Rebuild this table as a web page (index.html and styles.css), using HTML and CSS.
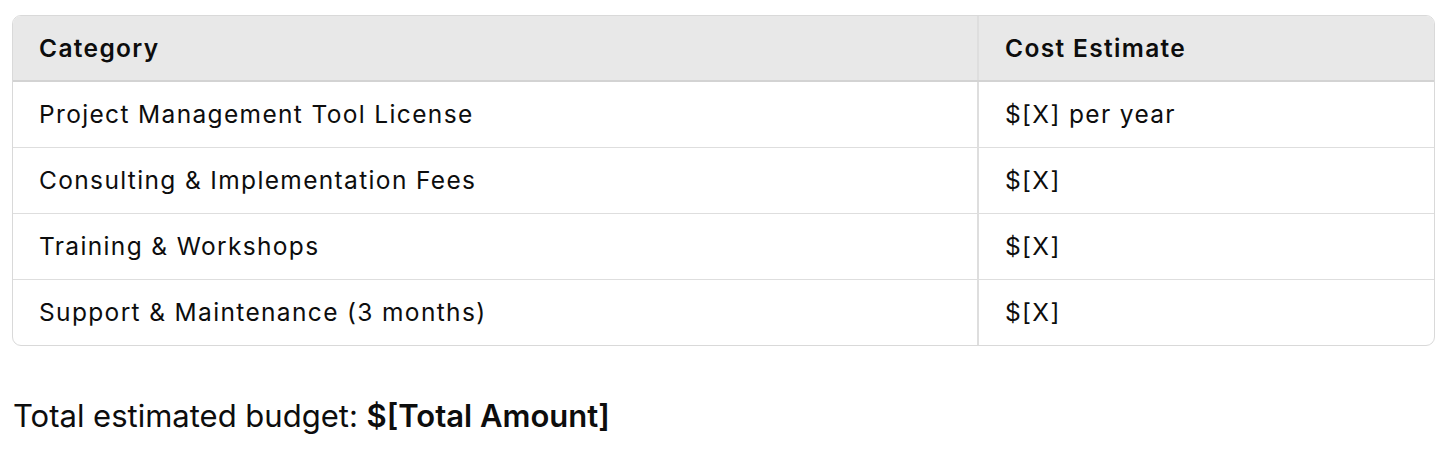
FILE: index.html
```html
<!DOCTYPE html>
<html>
<head>
<meta charset="utf-8">
<link rel="stylesheet" href="styles.css">
</head>
<body>
<div class="page">
  <div class="table-wrap">
    <table class="budget">
      <thead>
        <tr><th class="col-cat">Category</th><th>Cost Estimate</th></tr>
      </thead>
      <tbody>
        <tr><td>Project Management Tool License</td><td>$[X] per year</td></tr>
        <tr><td>Consulting &amp; Implementation Fees</td><td>$[X]</td></tr>
        <tr><td>Training &amp; Workshops</td><td>$[X]</td></tr>
        <tr><td>Support &amp; Maintenance (3 months)</td><td>$[X]</td></tr>
      </tbody>
    </table>
  </div>
  <p class="total">Total estimated budget: <strong>$[Total Amount]</strong></p>
</div>
</body>
</html>
```
FILE: styles.css
```css
html, body {
  margin: 0;
  padding: 0;
  background: #ffffff;
}
body {
  font-family: Inter, "Noto Sans", sans-serif;
  color: #0d0d0d;
}
.page {
  padding: 15px 7px 0 12px;
}
.table-wrap {
  border: 1.5px solid #d9d9d9;
  border-radius: 9px;
  overflow: hidden;
}
.budget {
  width: 100%;
  border-collapse: collapse;
  font-size: 24.5px;
  letter-spacing: 1.35px;
}
.budget th,
.budget td {
  text-align: left;
  padding: 0 26px;
  height: 66px;
  box-sizing: border-box;
}
.budget th {
  background: #e8e8e8;
  font-weight: 600;
  height: 65px;
  border-bottom: 2px solid #d3d3d3;
}
.budget td {
  font-weight: 400;
  border-top: 1.5px solid #dedede;
}
.budget tbody tr:first-child td {
  border-top: none;
}
.budget th + th,
.budget td + td {
  border-left: 2px solid #dedede;
}
.col-cat {
  width: 965px;
}
.total {
  margin: 51px 0 0 1px;
  font-size: 31px;
  letter-spacing: 0;
}
.total strong {
  font-weight: 600;
}
```
